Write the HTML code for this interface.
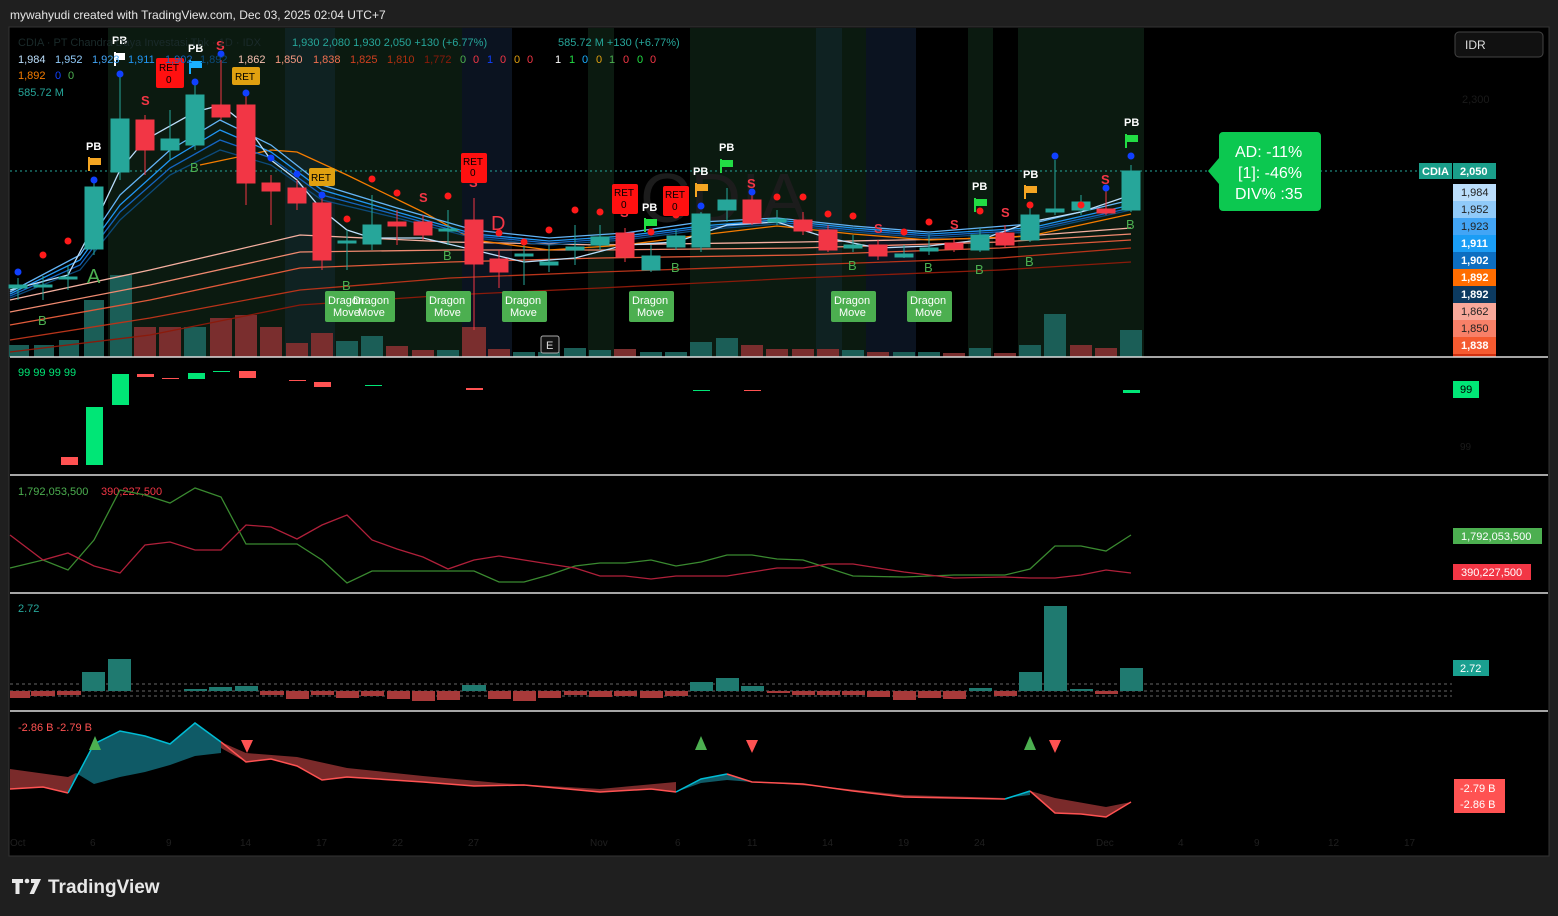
<!DOCTYPE html>
<html><head><meta charset="utf-8"><style>
html,body{margin:0;padding:0;background:#1f1f1f;width:1558px;height:916px;overflow:hidden;font-family:"Liberation Sans",sans-serif}
svg text{font-family:"Liberation Sans",sans-serif}
</style></head><body>
<svg width="1558" height="916" viewBox="0 0 1558 916" xmlns="http://www.w3.org/2000/svg">
<rect width="1558" height="916" fill="#1f1f1f"/>
<text x="10" y="19" fill="#e6e6e6" font-size="12">mywahyudi created with TradingView.com, Dec 03, 2025 02:04 UTC+7</text>
<rect x="9" y="27" width="1540" height="829" fill="#000" stroke="#333" stroke-width="1"/>
<!-- background columns -->
<g opacity="1">
<rect x="108" y="28" width="177" height="329" fill="#0b1a10"/>
<rect x="285" y="28" width="50" height="329" fill="#0f2222"/>
<rect x="335" y="28" width="127" height="329" fill="#0b1a10"/>
<rect x="462" y="28" width="50" height="329" fill="#0b1320"/>
<rect x="588" y="28" width="26" height="329" fill="#0b1a10"/>
<rect x="690" y="28" width="126" height="329" fill="#0b1a10"/>
<rect x="816" y="28" width="26" height="329" fill="#0f2222"/>
<rect x="842" y="28" width="24" height="329" fill="#0b1a10"/>
<rect x="866" y="28" width="50" height="329" fill="#0b1320"/>
<rect x="968" y="28" width="25" height="329" fill="#0b1a10"/>
<rect x="1018" y="28" width="126" height="329" fill="#0b1a10"/>
</g>
<text x="640" y="222" fill="#1c1c1c" font-size="70">CDIA</text>
<line x1="10" y1="171" x2="1452" y2="171" stroke="#26a69a" stroke-dasharray="2 3" stroke-width="1"/>
<!-- volume -->
<g>
<rect x="9" y="345" width="20" height="12" fill="#1b5e57"/><rect x="34" y="345" width="20" height="12" fill="#1b5e57"/><rect x="59" y="340" width="20" height="17" fill="#1b5e57"/><rect x="84" y="300" width="20" height="57" fill="#1b5e57"/><rect x="110" y="275" width="22" height="82" fill="#1b5e57"/><rect x="134" y="327" width="22" height="30" fill="#7a2e2e"/><rect x="159" y="327" width="22" height="30" fill="#7a2e2e"/><rect x="184" y="327" width="22" height="30" fill="#1b5e57"/><rect x="210" y="318" width="22" height="39" fill="#7a2e2e"/><rect x="235" y="315" width="22" height="42" fill="#7a2e2e"/><rect x="260" y="327" width="22" height="30" fill="#7a2e2e"/><rect x="286" y="343" width="22" height="14" fill="#7a2e2e"/><rect x="311" y="333" width="22" height="24" fill="#7a2e2e"/><rect x="336" y="341" width="22" height="16" fill="#1b5e57"/><rect x="361" y="336" width="22" height="21" fill="#1b5e57"/><rect x="386" y="346" width="22" height="11" fill="#7a2e2e"/><rect x="412" y="350" width="22" height="7" fill="#7a2e2e"/><rect x="437" y="350" width="22" height="7" fill="#1b5e57"/><rect x="462" y="327" width="24" height="30" fill="#7a2e2e"/><rect x="488" y="349" width="22" height="8" fill="#7a2e2e"/><rect x="513" y="352" width="22" height="5" fill="#1b5e57"/><rect x="538" y="352" width="22" height="5" fill="#1b5e57"/><rect x="564" y="348" width="22" height="9" fill="#1b5e57"/><rect x="589" y="350" width="22" height="7" fill="#1b5e57"/><rect x="614" y="349" width="22" height="8" fill="#7a2e2e"/><rect x="640" y="352" width="22" height="5" fill="#1b5e57"/><rect x="665" y="352" width="22" height="5" fill="#1b5e57"/><rect x="690" y="342" width="22" height="15" fill="#1b5e57"/><rect x="716" y="338" width="22" height="19" fill="#1b5e57"/><rect x="741" y="345" width="22" height="12" fill="#7a2e2e"/><rect x="766" y="349" width="22" height="8" fill="#7a2e2e"/><rect x="792" y="349" width="22" height="8" fill="#7a2e2e"/><rect x="817" y="349" width="22" height="8" fill="#7a2e2e"/><rect x="842" y="350" width="22" height="7" fill="#1b5e57"/><rect x="867" y="352" width="22" height="5" fill="#7a2e2e"/><rect x="893" y="352" width="22" height="5" fill="#1b5e57"/><rect x="918" y="352" width="22" height="5" fill="#1b5e57"/><rect x="943" y="353" width="22" height="4" fill="#7a2e2e"/><rect x="969" y="348" width="22" height="9" fill="#1b5e57"/><rect x="994" y="353" width="22" height="4" fill="#7a2e2e"/><rect x="1019" y="345" width="22" height="12" fill="#1b5e57"/><rect x="1044" y="314" width="22" height="43" fill="#1b5e57"/><rect x="1070" y="345" width="22" height="12" fill="#7a2e2e"/><rect x="1095" y="348" width="22" height="9" fill="#7a2e2e"/><rect x="1120" y="330" width="22" height="27" fill="#1b5e57"/>
</g>
<!-- MAs -->
<g fill="none" stroke-width="1.3">
<polyline stroke="#8b1a0a" points="10,352 150,335 300,305 450,295 600,288 800,278 1000,270 1131,262"/>
<polyline stroke="#b8341a" points="10,340 150,318 300,290 450,278 600,272 800,265 1000,258 1131,248"/>
<polyline stroke="#e05a3a" points="10,325 150,300 300,268 450,262 600,258 800,255 1000,248 1131,240"/>
<polyline stroke="#f08a70" points="10,312 150,285 300,252 450,250 600,250 800,248 1000,242 1131,234"/>
<polyline stroke="#f5b0a0" points="10,300 150,270 300,235 450,242 600,245 800,242 1000,238 1131,228"/>
<polyline stroke="#f57c00" points="200,165 271,150 297,152 347,175 423,212 474,240 549,250 625,245 701,235 777,226 853,234 929,240 1030,236 1131,214"/>
<polyline stroke="#0c4a7a" points="10,298 80,270 120,220 170,175 220,150 271,165 322,200 397,218 474,238 549,245 625,240 701,230 777,224 853,232 929,238 1030,232 1131,210"/>
<polyline stroke="#1565c0" points="10,296 80,265 120,212 170,168 220,140 271,158 322,195 397,215 474,236 549,243 625,238 701,228 777,222 853,230 929,236 1030,230 1131,208"/>
<polyline stroke="#2196f3" points="10,294 80,260 120,205 170,160 220,130 271,152 322,190 397,212 474,234 549,241 625,236 701,226 777,220 853,228 929,234 1030,228 1131,205"/>
<polyline stroke="#64b5f6" points="10,292 80,255 120,195 170,150 220,120 271,145 322,185 397,208 474,230 549,238 625,233 701,222 777,218 853,226 929,232 1030,224 1131,200"/>
<polyline stroke="#bbdefb" points="10,290 68,275 94,225 120,170 145,140 195,112 221,105 246,125 271,160 297,180 322,210 347,230 372,238 423,238 474,250 524,262 575,258 625,245 676,242 727,225 777,222 828,238 878,248 929,246 980,240 1030,222 1081,212 1131,195"/>
</g>
<!-- candles -->
<g stroke-width="1">
<g stroke="#26a69a" fill="#26a69a">
<line x1="18" y1="278" x2="18" y2="300"/><rect x="9" y="285" width="18" height="3"/>
<line x1="43" y1="276" x2="43" y2="300"/><rect x="34" y="285" width="18" height="2"/>
<line x1="68" y1="265" x2="68" y2="290"/><rect x="59" y="277" width="18" height="2"/>
<line x1="94" y1="180" x2="94" y2="255"/><rect x="85" y="187" width="18" height="62"/>
<line x1="120" y1="75" x2="120" y2="180"/><rect x="111" y="119" width="18" height="53"/>
<line x1="170" y1="110" x2="170" y2="160"/><rect x="161" y="139" width="18" height="11"/>
<line x1="195" y1="80" x2="195" y2="150"/><rect x="186" y="95" width="18" height="50"/>
<line x1="347" y1="230" x2="347" y2="270"/><rect x="338" y="241" width="18" height="2"/>
<line x1="372" y1="195" x2="372" y2="250"/><rect x="363" y="225" width="18" height="19"/>
<line x1="448" y1="210" x2="448" y2="245"/><rect x="439" y="229" width="18" height="2"/>
<line x1="524" y1="240" x2="524" y2="285"/><rect x="515" y="254" width="18" height="2"/>
<line x1="549" y1="245" x2="549" y2="272"/><rect x="540" y="262" width="18" height="3"/>
<line x1="575" y1="225" x2="575" y2="265"/><rect x="566" y="247" width="18" height="3"/>
<line x1="600" y1="225" x2="600" y2="250"/><rect x="591" y="237" width="18" height="8"/>
<line x1="651" y1="245" x2="651" y2="272"/><rect x="642" y="256" width="18" height="14"/>
<line x1="676" y1="230" x2="676" y2="250"/><rect x="667" y="236" width="18" height="11"/>
<line x1="701" y1="212" x2="701" y2="252"/><rect x="692" y="214" width="18" height="33"/>
<line x1="727" y1="188" x2="727" y2="222"/><rect x="718" y="200" width="18" height="10"/>
<line x1="777" y1="210" x2="777" y2="225"/><rect x="768" y="219" width="18" height="3"/>
<line x1="853" y1="235" x2="853" y2="252"/><rect x="844" y="245" width="18" height="3"/>
<line x1="904" y1="245" x2="904" y2="258"/><rect x="895" y="254" width="18" height="3"/>
<line x1="929" y1="235" x2="929" y2="255"/><rect x="920" y="248" width="18" height="3"/>
<line x1="980" y1="228" x2="980" y2="252"/><rect x="971" y="235" width="18" height="15"/>
<line x1="1030" y1="205" x2="1030" y2="242"/><rect x="1021" y="215" width="18" height="25"/>
<line x1="1055" y1="160" x2="1055" y2="215"/><rect x="1046" y="209" width="18" height="3"/>
<line x1="1081" y1="195" x2="1081" y2="215"/><rect x="1072" y="202" width="18" height="8"/>
<line x1="1131" y1="165" x2="1131" y2="212"/><rect x="1122" y="171" width="18" height="39"/>
</g>
<g stroke="#f23645" fill="#f23645">
<line x1="145" y1="115" x2="145" y2="175"/><rect x="136" y="120" width="18" height="30"/>
<line x1="221" y1="60" x2="221" y2="120"/><rect x="212" y="105" width="18" height="12"/>
<line x1="246" y1="95" x2="246" y2="205"/><rect x="237" y="105" width="18" height="78"/>
<line x1="271" y1="175" x2="271" y2="225"/><rect x="262" y="183" width="18" height="8"/>
<line x1="297" y1="180" x2="297" y2="210"/><rect x="288" y="188" width="18" height="15"/>
<line x1="322" y1="198" x2="322" y2="270"/><rect x="313" y="203" width="18" height="57"/>
<line x1="397" y1="210" x2="397" y2="245"/><rect x="388" y="222" width="18" height="4"/>
<line x1="423" y1="215" x2="423" y2="240"/><rect x="414" y="222" width="18" height="13"/>
<line x1="474" y1="198" x2="474" y2="330"/><rect x="465" y="220" width="18" height="44"/>
<line x1="499" y1="250" x2="499" y2="288"/><rect x="490" y="259" width="18" height="13"/>
<line x1="625" y1="228" x2="625" y2="262"/><rect x="616" y="233" width="18" height="24"/>
<line x1="752" y1="195" x2="752" y2="225"/><rect x="743" y="200" width="18" height="23"/>
<line x1="803" y1="212" x2="803" y2="235"/><rect x="794" y="220" width="18" height="11"/>
<line x1="828" y1="225" x2="828" y2="252"/><rect x="819" y="230" width="18" height="20"/>
<line x1="878" y1="240" x2="878" y2="260"/><rect x="869" y="245" width="18" height="11"/>
<line x1="954" y1="238" x2="954" y2="252"/><rect x="945" y="243" width="18" height="6"/>
<line x1="1005" y1="225" x2="1005" y2="248"/><rect x="996" y="233" width="18" height="12"/>
<line x1="1106" y1="185" x2="1106" y2="215"/><rect x="1097" y="209" width="18" height="4"/>
</g>
</g>
<!-- dots -->
<g fill="#ff1a1a">
<circle cx="43" cy="255" r="3.5"/><circle cx="68" cy="241" r="3.5"/><circle cx="347" cy="219" r="3.5"/><circle cx="372" cy="179" r="3.5"/><circle cx="397" cy="193" r="3.5"/><circle cx="448" cy="196" r="3.5"/><circle cx="499" cy="233" r="3.5"/><circle cx="524" cy="242" r="3.5"/><circle cx="549" cy="230" r="3.5"/><circle cx="575" cy="210" r="3.5"/><circle cx="600" cy="212" r="3.5"/><circle cx="651" cy="232" r="3.5"/><circle cx="676" cy="215" r="3.5"/><circle cx="777" cy="197" r="3.5"/><circle cx="803" cy="197" r="3.5"/><circle cx="828" cy="214" r="3.5"/><circle cx="853" cy="216" r="3.5"/><circle cx="904" cy="232" r="3.5"/><circle cx="929" cy="222" r="3.5"/><circle cx="980" cy="211" r="3.5"/><circle cx="1030" cy="205" r="3.5"/><circle cx="1081" cy="205" r="3.5"/>
</g>
<g fill="#1040ff">
<circle cx="18" cy="272" r="3.5"/><circle cx="94" cy="180" r="3.5"/><circle cx="120" cy="74" r="3.5"/><circle cx="195" cy="82" r="3.5"/><circle cx="221" cy="54" r="3.5"/><circle cx="246" cy="93" r="3.5"/><circle cx="271" cy="158" r="3.5"/><circle cx="297" cy="174" r="3.5"/><circle cx="322" cy="195" r="3.5"/><circle cx="701" cy="206" r="3.5"/><circle cx="752" cy="192" r="3.5"/><circle cx="1055" cy="156" r="3.5"/><circle cx="1106" cy="188" r="3.5"/><circle cx="1131" cy="156" r="3.5"/>
</g>
<!-- S / B / labels -->
<g font-size="13" font-weight="bold" fill="#f23645">
<text x="141" y="105">S</text><text x="216" y="50">S</text><text x="419" y="202">S</text><text x="469" y="187">S</text><text x="620" y="217">S</text><text x="747" y="188">S</text><text x="874" y="233">S</text><text x="950" y="229">S</text><text x="1001" y="217">S</text><text x="1101" y="184">S</text>
</g>
<text x="491" y="230" font-size="20" fill="#f23645">D</text>
<text x="87" y="283" font-size="20" fill="#4caf50">A</text>
<g font-size="13" fill="#4caf50">
<text x="38" y="325">B</text><text x="190" y="172">B</text><text x="342" y="290">B</text><text x="443" y="260">B</text><text x="671" y="272">B</text><text x="848" y="270">B</text><text x="924" y="272">B</text><text x="975" y="274">B</text><text x="1025" y="266">B</text><text x="1126" y="229">B</text>
</g>
<g font-size="11" font-weight="bold" fill="#fff">
<text x="112" y="44">PB</text><text x="86" y="150">PB</text><text x="188" y="52">PB</text><text x="642" y="211">PB</text><text x="693" y="175">PB</text><text x="719" y="151">PB</text><text x="972" y="190">PB</text><text x="1023" y="178">PB</text><text x="1124" y="126">PB</text>
</g>
<g fill="#f5a623"><path d="M88 157h2v14h-2zM90 158h11v7h-11z"/><path d="M1024 185h2v14h-2zM1026 186h11v7h-11z"/><path d="M695 183h2v14h-2zM697 184h11v7h-11z"/></g>
<g fill="#22dd44"><path d="M644 218h2v14h-2zM646 219h11v7h-11z"/><path d="M720 159h2v14h-2zM722 160h11v7h-11z"/><path d="M974 198h2v14h-2zM976 199h11v7h-11z"/><path d="M1125 134h2v14h-2zM1127 135h11v7h-11z"/></g>
<g fill="#1ab0ff"><path d="M189 60h2v14h-2zM191 61h11v7h-11z"/></g>
<g fill="#fff"><path d="M114 52h2v14h-2zM116 53h9v7h-9z"/></g>
<g>
<rect x="156" y="58" width="28" height="30" rx="2" fill="#ff1010"/><text x="159" y="71" font-size="10" fill="#000">RET</text><text x="166" y="83" font-size="10" fill="#000">0</text>
<rect x="232" y="67" width="28" height="18" rx="2" fill="#e0a010"/><text x="235" y="80" font-size="10" fill="#000">RET</text>
<rect x="309" y="168" width="26" height="18" rx="2" fill="#e0a010"/><text x="311" y="181" font-size="10" fill="#000">RET</text>
<rect x="461" y="153" width="26" height="30" rx="2" fill="#ff1010"/><text x="463" y="165" font-size="10" fill="#000">RET</text><text x="470" y="176" font-size="10" fill="#000">0</text>
<rect x="612" y="184" width="26" height="30" rx="2" fill="#ff1010"/><text x="614" y="196" font-size="10" fill="#000">RET</text><text x="621" y="208" font-size="10" fill="#000">0</text>
<rect x="663" y="186" width="26" height="30" rx="2" fill="#ff1010"/><text x="665" y="198" font-size="10" fill="#000">RET</text><text x="672" y="210" font-size="10" fill="#000">0</text>
</g>
<g font-size="11" fill="#fff">
<rect x="325" y="291" width="45" height="31" rx="2" fill="#4caf50"/><rect x="350" y="291" width="45" height="31" rx="2" fill="#4caf50"/>
<text x="328" y="304">Dragon</text><text x="333" y="316">Move</text><text x="353" y="304">Dragon</text><text x="358" y="316">Move</text>
<rect x="426" y="291" width="45" height="31" rx="2" fill="#4caf50"/><text x="429" y="304">Dragon</text><text x="434" y="316">Move</text>
<rect x="502" y="291" width="45" height="31" rx="2" fill="#4caf50"/><text x="505" y="304">Dragon</text><text x="510" y="316">Move</text>
<rect x="629" y="291" width="45" height="31" rx="2" fill="#4caf50"/><text x="632" y="304">Dragon</text><text x="637" y="316">Move</text>
<rect x="831" y="291" width="45" height="31" rx="2" fill="#4caf50"/><text x="834" y="304">Dragon</text><text x="839" y="316">Move</text>
<rect x="907" y="291" width="45" height="31" rx="2" fill="#4caf50"/><text x="910" y="304">Dragon</text><text x="915" y="316">Move</text>
</g>
<rect x="541" y="336" width="18" height="17" rx="2" fill="#111" stroke="#aaa"/><text x="546" y="349" font-size="11" fill="#ddd">E</text>
<!-- legend -->
<g font-size="11">
<text x="18" y="46" fill="#1a2a2a">CDIA · PT Chandra Daya Investasi Tbk · 1D · IDX</text>
<text x="292" y="46" fill="#26a69a">1,930   2,080   1,930   2,050 +130 (+6.77%)</text>
<text x="558" y="46" fill="#26a69a">585.72 M  +130 (+6.77%)</text>
<text x="18" y="63" fill="#bbdefb">1,984</text><text x="55" y="63" fill="#90caf9">1,952</text><text x="92" y="63" fill="#42a5f5">1,923</text><text x="128" y="63" fill="#2196f3">1,911</text><text x="165" y="63" fill="#1565c0">1,902</text><text x="200" y="63" fill="#0c4a7a">1,892</text>
<text x="238" y="63" fill="#f5c0b0">1,862</text><text x="275" y="63" fill="#f59880">1,850</text><text x="313" y="63" fill="#f07050">1,838</text><text x="350" y="63" fill="#d04020">1,825</text><text x="387" y="63" fill="#b03010">1,810</text><text x="424" y="63" fill="#8b1a0a">1,772</text>
<text x="460" y="63" fill="#4caf50">0</text><text x="473" y="63" fill="#f23645">0</text><text x="487" y="63" fill="#1040ff">1</text><text x="500" y="63" fill="#f23645">0</text><text x="514" y="63" fill="#e0a010">0</text><text x="527" y="63" fill="#f23645">0</text>
<text x="555" y="63" fill="#fff">1</text><text x="569" y="63" fill="#22dd44">1</text><text x="582" y="63" fill="#1ab0ff">0</text><text x="596" y="63" fill="#e0a010">0</text><text x="609" y="63" fill="#4caf50">1</text><text x="623" y="63" fill="#f23645">0</text><text x="637" y="63" fill="#22dd44">0</text><text x="650" y="63" fill="#f23645">0</text>
<text x="18" y="79" fill="#f57c00">1,892</text><text x="55" y="79" fill="#1040ff">0</text><text x="68" y="79" fill="#4caf50">0</text>
<text x="18" y="96" fill="#26a69a">585.72 M</text>
</g>
<!-- right axis main -->
<rect x="1455" y="32" width="88" height="25" rx="4" fill="#111" stroke="#444"/><text x="1465" y="49" font-size="12" fill="#ddd">IDR</text>
<text x="1462" y="103" font-size="11" fill="#1a1a1a">2,300</text>
<rect x="1419" y="163" width="33" height="16" fill="#1a9e8a"/><text x="1422" y="175" font-size="11" font-weight="bold" fill="#fff">CDIA</text>
<rect x="1453" y="163" width="43" height="16" fill="#1a9e8a"/><text x="1460" y="175" font-size="11" font-weight="bold" fill="#fff">2,050</text>
<g font-size="11">
<rect x="1453" y="184" width="43" height="17" fill="#bbdefb"/><text x="1461" y="196" fill="#222">1,984</text>
<rect x="1453" y="201" width="43" height="17" fill="#90caf9"/><text x="1461" y="213" fill="#222">1,952</text>
<rect x="1453" y="218" width="43" height="17" fill="#42a5f5"/><text x="1461" y="230" fill="#222">1,923</text>
<rect x="1453" y="235" width="43" height="17" fill="#1a9df5"/><text x="1461" y="247" fill="#fff" font-weight="bold">1,911</text>
<rect x="1453" y="252" width="43" height="17" fill="#0d6ec0"/><text x="1461" y="264" fill="#fff" font-weight="bold">1,902</text>
<rect x="1453" y="269" width="43" height="17" fill="#ff6d00"/><text x="1461" y="281" fill="#fff" font-weight="bold">1,892</text>
<rect x="1453" y="286" width="43" height="17" fill="#0c3a60"/><text x="1461" y="298" fill="#fff" font-weight="bold">1,892</text>
<rect x="1453" y="303" width="43" height="17" fill="#f8a89a"/><text x="1461" y="315" fill="#222">1,862</text>
<rect x="1453" y="320" width="43" height="17" fill="#f88068"/><text x="1461" y="332" fill="#222">1,850</text>
<rect x="1453" y="337" width="43" height="17" fill="#f55a30"/><text x="1461" y="349" fill="#fff" font-weight="bold">1,838</text>
<rect x="1453" y="354" width="43" height="3" fill="#d03010"/>
</g>
<!-- AD box -->
<path d="M1229 132h88a4 4 0 0 1 4 4v71a4 4 0 0 1-4 4h-94a4 4 0 0 1-4-4v-23l-11-13l11-13v-22a4 4 0 0 1 4-4z" fill="#0cc850"/>
<g font-size="16" fill="#fff"><text x="1235" y="157">AD: -11%</text><text x="1238" y="178">[1]: -46%</text><text x="1235" y="199">DIV% :35</text></g>
<!-- separators -->
<g stroke="#ddd" stroke-width="1.5"><line x1="10" y1="357" x2="1548" y2="357"/><line x1="10" y1="475" x2="1548" y2="475"/><line x1="10" y1="593" x2="1548" y2="593"/><line x1="10" y1="711" x2="1548" y2="711"/></g>
<!-- pane2 -->
<text x="18" y="376" font-size="11" fill="#00e676">99  99  99  99</text>
<rect x="61" y="457" width="17" height="8" fill="#ff5252"/><rect x="86" y="407" width="17" height="58" fill="#00e676"/><rect x="112" y="374" width="17" height="31" fill="#00e676"/>
<rect x="137" y="374" width="17" height="3" fill="#ff5252"/><rect x="162" y="378" width="17" height="1" fill="#ff5252"/><rect x="188" y="373" width="17" height="6" fill="#00e676"/><rect x="213" y="371" width="17" height="1" fill="#00e676"/><rect x="239" y="371" width="17" height="7" fill="#ff5252"/><rect x="289" y="380" width="17" height="1" fill="#ff5252"/><rect x="314" y="382" width="17" height="5" fill="#ff5252"/><rect x="365" y="385" width="17" height="1" fill="#00e676"/><rect x="466" y="388" width="17" height="2" fill="#ff5252"/><rect x="693" y="390" width="17" height="1" fill="#00e676"/><rect x="744" y="390" width="17" height="1" fill="#ff5252"/><rect x="1123" y="390" width="17" height="3" fill="#00e676"/>
<rect x="1453" y="381" width="26" height="17" fill="#00e676"/><text x="1460" y="393" font-size="11" fill="#000">99</text>
<text x="1460" y="450" font-size="10" fill="#1a1a1a">99</text>
<!-- pane3 -->
<text x="18" y="495" font-size="11" fill="#4caf50">1,792,053,500</text><text x="101" y="495" font-size="11" fill="#f23645">390,227,500</text>
<polyline fill="none" stroke="#3a8a30" stroke-width="1.3" points="10,568 43,560 68,570 94,540 120,490 145,495 170,503 195,488 221,497 246,544 297,544 322,560 347,583 372,571 474,571 499,582 524,582 549,575 575,566 600,563 625,563 651,560 676,566 701,562 727,555 752,555 777,559 803,560 828,568 853,576 904,577 954,575 1005,575 1030,569 1055,546 1081,546 1106,551 1131,535"/>
<polyline fill="none" stroke="#b0203a" stroke-width="1.3" points="10,535 43,560 68,553 94,566 120,573 145,545 170,542 195,550 221,550 246,525 271,527 297,539 322,525 347,515 372,540 397,549 423,557 448,569 474,560 499,556 524,560 549,564 575,568 600,576 625,576 651,579 676,576 727,576 752,572 777,568 803,568 828,564 853,564 878,568 904,572 929,575 954,578 1005,577 1030,578 1055,578 1081,575 1106,570 1131,573"/>
<rect x="1453" y="528" width="89" height="16" fill="#4caf50"/><text x="1461" y="540" font-size="11" fill="#fff">1,792,053,500</text>
<rect x="1453" y="564" width="78" height="16" fill="#f23645"/><text x="1461" y="576" font-size="11" fill="#fff">390,227,500</text>
<!-- pane4 -->
<text x="18" y="612" font-size="11" fill="#26a69a">2.72</text>
<g stroke="#666" stroke-dasharray="3 3"><line x1="10" y1="684" x2="1452" y2="684"/><line x1="10" y1="691" x2="1452" y2="691"/><line x1="10" y1="696" x2="1452" y2="696"/></g>
<g fill="#1f7a70">
<rect x="82" y="672" width="23" height="19"/><rect x="108" y="659" width="23" height="32"/><rect x="184" y="689" width="23" height="2"/><rect x="209" y="687" width="23" height="4"/><rect x="235" y="686" width="23" height="5"/><rect x="462" y="685" width="24" height="6"/><rect x="690" y="682" width="23" height="9"/><rect x="716" y="678" width="23" height="13"/><rect x="741" y="686" width="23" height="5"/><rect x="969" y="688" width="23" height="3"/><rect x="1019" y="672" width="23" height="19"/><rect x="1044" y="606" width="23" height="85"/><rect x="1070" y="689" width="23" height="2"/><rect x="1120" y="668" width="23" height="23"/>
</g>
<g fill="#a83a3a">
<rect x="10" y="691" width="20" height="7"/><rect x="31" y="691" width="24" height="5"/><rect x="57" y="691" width="24" height="4"/><rect x="260" y="691" width="24" height="4"/><rect x="286" y="691" width="23" height="8"/><rect x="311" y="691" width="23" height="4"/><rect x="336" y="691" width="23" height="7"/><rect x="361" y="691" width="23" height="5"/><rect x="387" y="691" width="23" height="8"/><rect x="412" y="691" width="23" height="10"/><rect x="437" y="691" width="23" height="9"/><rect x="488" y="691" width="23" height="8"/><rect x="513" y="691" width="23" height="10"/><rect x="538" y="691" width="23" height="7"/><rect x="564" y="691" width="23" height="4"/><rect x="589" y="691" width="23" height="6"/><rect x="614" y="691" width="23" height="5"/><rect x="640" y="691" width="23" height="7"/><rect x="665" y="691" width="23" height="5"/><rect x="767" y="691" width="23" height="2"/><rect x="792" y="691" width="23" height="4"/><rect x="817" y="691" width="23" height="4"/><rect x="842" y="691" width="23" height="4"/><rect x="867" y="691" width="23" height="6"/><rect x="893" y="691" width="23" height="9"/><rect x="918" y="691" width="23" height="7"/><rect x="943" y="691" width="23" height="8"/><rect x="994" y="691" width="23" height="5"/><rect x="1095" y="691" width="23" height="3"/>
</g>
<rect x="1453" y="660" width="36" height="16" fill="#1aa090"/><text x="1460" y="672" font-size="11" fill="#fff">2.72</text>
<!-- pane5 -->
<text x="18" y="731" font-size="11" fill="#ff5252">-2.86 B  -2.79 B</text>
<polygon fill="#0f5a66" points="68,793 94,744 120,731 145,736 170,744 195,723 221,742 221,753 195,756 170,765 145,772 120,777 94,784 76,773"/>
<polygon fill="#7a2a2a" points="10,769 68,777 76,773 68,793 43,787 10,789"/>
<polygon fill="#7a2a2a" points="221,742 246,753 297,757 347,768 423,776 499,783 600,789 676,782 676,792 651,789 600,792 524,785 474,786 423,782 347,777 322,780 297,766 271,759 246,762 221,748"/>
<polygon fill="#0f5a66" points="676,792 701,779 727,774 752,782 727,780 701,783"/>
<polygon fill="#7a2a2a" points="727,774 752,782 828,787 904,795 1005,798 1030,791 1055,798 1106,807 1131,802 1106,817 1081,814 1055,813 1030,791 1005,798 954,798 904,797 853,791 803,784 752,782"/>
<polygon fill="#0f5a66" points="1005,798 1030,791 1030,795"/>
<polyline fill="none" stroke="#00bcd4" stroke-width="1.5" points="68,793 94,744 120,731 145,736 170,744 195,723 221,742"/>
<polyline fill="none" stroke="#00bcd4" stroke-width="1.5" points="676,792 701,779 727,774"/>
<polyline fill="none" stroke="#00bcd4" stroke-width="1.5" points="1005,799 1030,791"/>
<polyline fill="none" stroke="#ff5252" stroke-width="1.5" points="10,789 43,787 68,793"/>
<polyline fill="none" stroke="#ff5252" stroke-width="1.5" points="221,742 246,762 271,759 297,766 322,780 347,777 423,782 474,786 524,785 600,792 651,789 676,792"/>
<polyline fill="none" stroke="#ff5252" stroke-width="1.5" points="727,774 752,782 803,784 853,791 904,797 954,798 1005,799"/>
<polyline fill="none" stroke="#ff5252" stroke-width="1.5" points="1030,791 1055,813 1081,814 1106,817 1131,802"/>
<g fill="#4caf50"><polygon points="95,736 89,750 101,750"/><polygon points="701,736 695,750 707,750"/><polygon points="1030,736 1024,750 1036,750"/></g>
<g fill="#ff5252"><polygon points="241,740 253,740 247,753"/><polygon points="746,740 758,740 752,753"/><polygon points="1049,740 1061,740 1055,753"/></g>
<rect x="1454" y="779" width="51" height="34" fill="#ff5252"/><text x="1460" y="792" font-size="11" fill="#fff">-2.79 B</text><text x="1460" y="808" font-size="11" fill="#fff">-2.86 B</text>
<!-- time axis -->
<g font-size="10" fill="#1f1f1f"><text x="10" y="846">Oct</text><text x="90" y="846">6</text><text x="166" y="846">9</text><text x="240" y="846">14</text><text x="316" y="846">17</text><text x="392" y="846">22</text><text x="468" y="846">27</text><text x="590" y="846">Nov</text><text x="675" y="846">6</text><text x="747" y="846">11</text><text x="822" y="846">14</text><text x="898" y="846">19</text><text x="974" y="846">24</text><text x="1096" y="846">Dec</text><text x="1178" y="846">4</text><text x="1254" y="846">9</text><text x="1328" y="846">12</text><text x="1404" y="846">17</text></g>
<!-- logo -->
<g fill="#e8e8e8"><path d="M12 879h11v4h-3.5v11h-4v-11h-3.5z"/><circle cx="27" cy="881" r="2.3"/><path d="M31 879h10l-7 15h-4.5l5-11h-3.5z"/></g>
<text x="48" y="893" font-size="19" font-weight="bold" fill="#e8e8e8">TradingView</text>
</svg>
</body></html>
